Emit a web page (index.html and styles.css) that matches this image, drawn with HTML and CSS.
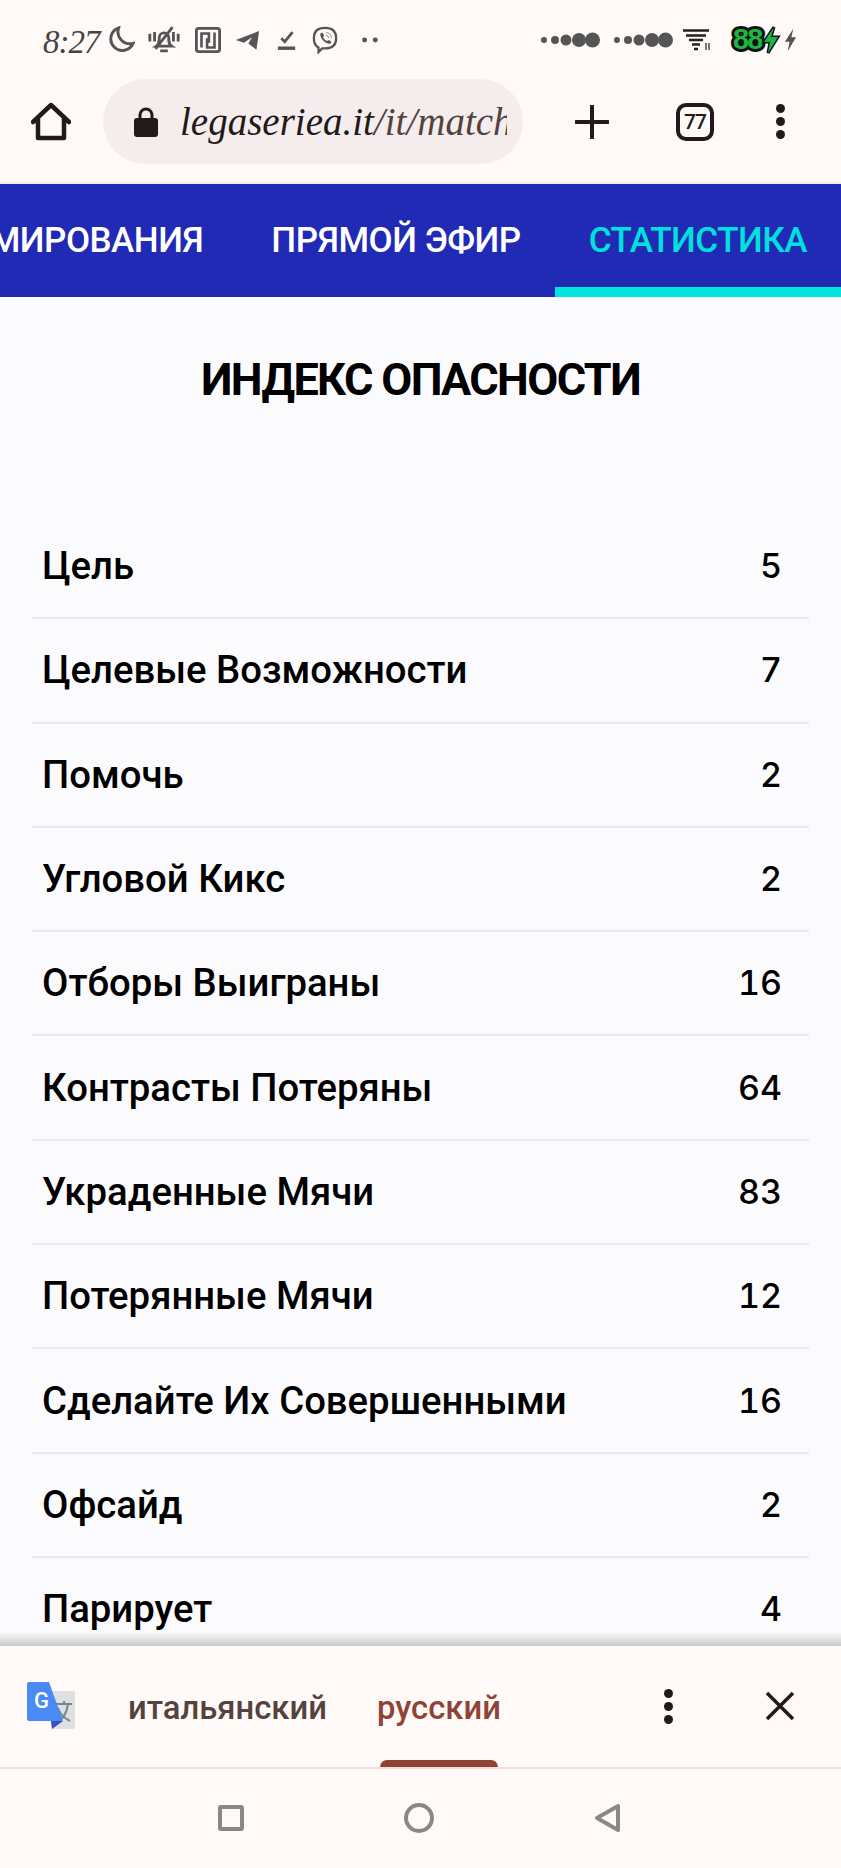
FILE: index.html
```html
<!DOCTYPE html>
<html lang="ru">
<head>
  <meta charset="UTF-8">
  <title>Индекс опасности</title>
  <link rel="stylesheet" href="styles.css">
</head>
<body>

<div class="phone">

  <!-- status bar -->
  <div class="statusbar">
    <span class="clock">8:27</span>
    <svg class="st-icon moon" viewBox="0 0 28 28"><path d="M11 2a12 12 0 1 0 15 16 A12.500 12.500 0 0 1 11 2z" fill="none" stroke="#555" stroke-width="3"/></svg>
    <svg class="st-icon bell" viewBox="0 0 36 30"><path d="M10 22c3-2 3-5 3-9a5 5 0 0 1 10 0c0 4 0 7 3 9z M14 27h8 M3 9v8 M8 7v10 M33 9v8 M28 7v10 M9 25 27 2" fill="none" stroke="#555" stroke-width="3"/></svg>
    <svg class="st-icon nfc" viewBox="0 0 28 28"><rect x="1.500" y="1.500" width="25" height="25" rx="2.500" fill="none" stroke="#555" stroke-width="3"/><path d="M7 22V7h8v10 M21 6v16h-8V12" fill="none" stroke="#555" stroke-width="2.800"/></svg>
    <svg class="st-icon tg" viewBox="0 0 28 24"><path d="M1 12 27 2 24 23 15 16 19 9 10 15z" fill="#555"/></svg>
    <svg class="st-icon chk" viewBox="0 0 22 24"><path d="M5 10l4 4 9-11" fill="none" stroke="#555" stroke-width="3.200"/><path d="M1 21.500h20" stroke="#555" stroke-width="4"/></svg>
    <svg class="st-icon viber" viewBox="0 0 28 30"><path d="M14 2c7 0 12 3 12 11s-5 11-12 11h-3l-4 4v-5C3 21 2 18 2 13 2 5 7 2 14 2z" fill="none" stroke="#555" stroke-width="2.400"/><path d="M9 8l2-1 2 3-1 2c1 2 2 3 4 4l2-1 3 2-1 2c-5 1-12-6-11-11z" fill="#555"/><path d="M15 7a6 6 0 0 1 6 6 M15 10a3 3 0 0 1 3 3" fill="none" stroke="#888" stroke-width="1"/></svg>
    <svg class="st-icon more" viewBox="0 0 18 6"><circle cx="3" cy="3" r="2.800" fill="#555"/><circle cx="15" cy="3" r="2.800" fill="#555"/></svg>

    <div class="st-right">
      <svg class="sig" viewBox="0 0 60 16"><circle cx="4" cy="8" r="3" fill="#555"/><circle cx="15" cy="8" r="4" fill="#555"/><circle cx="26" cy="8" r="5.500" fill="#555"/><circle cx="39" cy="8" r="7" fill="#555"/><circle cx="52.500" cy="8" r="7.500" fill="#555"/></svg>
      <svg class="sig" viewBox="0 0 60 16"><circle cx="4" cy="8" r="3" fill="#555"/><circle cx="15" cy="8" r="4" fill="#555"/><circle cx="26" cy="8" r="5.500" fill="#555"/><circle cx="39" cy="8" r="7" fill="#555"/><circle cx="52.500" cy="8" r="7.500" fill="#555"/></svg>
      <svg class="wifi" viewBox="0 0 28 22"><path d="M0 1.500h26 M3 6.500h20 M6 11h14 M9 15.500h8 M11 20h4" stroke="#222" stroke-width="2.600"/><path d="M23 14v7 M26 14v7" stroke="#555" stroke-width="1.600"/></svg>
      <span class="battery">88<svg class="batt-bolt" viewBox="0 0 20 30"><path d="M13 2 3 17h6l-2 11 10-16h-7z" fill="#1db53f" stroke="#111" stroke-width="3" paint-order="stroke"/></svg></span>
      <svg class="bolt" viewBox="0 0 14 24"><path d="M10 0 1 14h5l-2 10 9-15H8z" fill="#555"/></svg>
    </div>
  </div>

  <!-- browser toolbar -->
  <div class="toolbar">
    <svg class="home" viewBox="0 0 40 40"><path d="M2 20 20 3l18 17 M7 17v19h26V17" fill="none" stroke="#211a18" stroke-width="4.500" stroke-linejoin="round" stroke-linecap="round"/></svg>
    <div class="urlbar">
      <svg class="lock" viewBox="0 0 24 30"><path d="M6 13V8a6 6 0 0 1 12 0v5" fill="none" stroke="#211a18" stroke-width="3"/><rect x="0" y="11" width="24" height="19" rx="3" fill="#211a18"/></svg>
      <div class="url"><span class="url-host">legaseriea.it</span>/it/match-center</div>
    </div>
    <svg class="plus" viewBox="0 0 34 34"><path d="M17 1v32 M1 17h32" stroke="#211a18" stroke-width="4" stroke-linecap="round"/></svg>
    <div class="tabs-count">77</div>
    <div class="kebab"><i></i><i></i><i></i></div>
  </div>

  <!-- page -->
  <div class="page">
    <nav class="match-nav">
      <a class="nav-clip">ФОРМИРОВАНИЯ</a>
      <a>ПРЯМОЙ ЭФИР</a>
      <a class="active">СТАТИСТИКА</a>
    </nav>

    <h1 class="title">ИНДЕКС ОПАСНОСТИ</h1>

    <div class="stats">
      <div class="stat"><span>Цель</span><b>5</b></div>
      <div class="stat"><span>Целевые Возможности</span><b>7</b></div>
      <div class="stat"><span>Помочь</span><b>2</b></div>
      <div class="stat"><span>Угловой Кикс</span><b>2</b></div>
      <div class="stat"><span>Отборы Выиграны</span><b>16</b></div>
      <div class="stat"><span>Контрасты Потеряны</span><b>64</b></div>
      <div class="stat"><span>Украденные Мячи</span><b>83</b></div>
      <div class="stat"><span>Потерянные Мячи</span><b>12</b></div>
      <div class="stat"><span>Сделайте Их Совершенными</span><b>16</b></div>
      <div class="stat"><span>Офсайд</span><b>2</b></div>
      <div class="stat"><span>Парирует</span><b>4</b></div>
    </div>
  </div>

  <!-- translate bar -->
  <div class="translate">
    <svg class="gt" viewBox="0 0 48 48">
      <rect x="24" y="9" width="24" height="38" rx="2" fill="#dfe1e1"/>
      <path d="M29 22h16 M37 19v3 M32 39c6-4 8-10 9-17 M31 26c2 6 6 10 12 13" fill="none" stroke="#72888a" stroke-width="2"/>
      <path d="M2 0h20l14 39H2a2 2 0 0 1-2-2V2a2 2 0 0 1 2-2z" fill="#4a8af4"/>
      <path d="M24 39h12l-11 8z" fill="#3c4fc0"/>
      <text x="7" y="26" class="gt-g">G</text>
    </svg>
    <div class="lang">итальянский</div>
    <div class="lang selected">русский</div>
    <div class="kebab tr-kebab"><i></i><i></i><i></i></div>
    <svg class="close" viewBox="0 0 30 30"><path d="M2 2l26 26 M28 2 2 28" stroke="#211a18" stroke-width="3.500"/></svg>
  </div>

  <!-- android nav -->
  <div class="navbar">
    <svg class="nb-icon" viewBox="0 0 30 30"><rect x="4" y="4" width="22" height="22" rx="1" fill="none" stroke="#888" stroke-width="4"/></svg>
    <svg class="nb-icon" viewBox="0 0 30 30"><circle cx="15" cy="15" r="13" fill="none" stroke="#888" stroke-width="4"/></svg>
    <svg class="nb-icon" viewBox="0 0 30 30"><path d="M26 3v24L5 15z" fill="none" stroke="#888" stroke-width="4" stroke-linejoin="round"/></svg>
  </div>

</div>

</body>
</html>
```

FILE: styles.css
```css
* {
  box-sizing: border-box;
}
body {
  margin: 0;
  background: #fffaf8;
  font-family: Roboto, sans-serif;
}
.phone {
  width: 841px;
  height: 1868px;
  display: flex;
  flex-direction: column;
  overflow: hidden;
}

/* status bar */
.statusbar {
  height: 79px;
  padding: 0 0 0 43px;
  display: flex;
  align-items: center;
  flex-shrink: 0;
}
.clock {
  width: 65px;
  margin-top: 5px;
  font: italic 33px "Liberation Serif", serif;
  letter-spacing: -1px;
  color: #444;
}
.st-icon {
  display: block;
  flex-shrink: 0;
}
.moon { width: 27px; height: 27px; }
.bell { width: 34px; height: 29px; margin-left: 12px; }
.nfc { width: 26px; height: 26px; margin-left: 14px; }
.tg { width: 25px; height: 22px; margin-left: 14px; }
.chk { width: 19px; height: 24px; margin-left: 17px; }
.viber { width: 26px; height: 28px; margin-left: 16px; }
.more { width: 16px; height: 6px; margin-left: 24px; }
.st-right {
  display: flex;
  align-items: center;
  margin-left: 162px;
}
.sig {
  width: 60px;
  height: 16px;
  margin-right: 13px;
}
.wifi {
  width: 28px;
  height: 22px;
  margin-left: -3px;
}
.battery {
  margin-left: 19px;
  width: 54px;
  height: 30px;
  padding-left: 3px;
  display: flex;
  align-items: center;
  font: 700 29px/1 "Liberation Sans", sans-serif;
  letter-spacing: -2px;
  color: #1db53f;
  -webkit-text-stroke: 6px #111;
  paint-order: stroke fill;
}
.batt-bolt {
  width: 20px;
  height: 30px;
  flex-shrink: 0;
}
.bolt {
  width: 13px;
  height: 24px;
}

/* toolbar */
.toolbar {
  height: 105px;
  flex-shrink: 0;
  display: flex;
  align-items: center;
  padding-bottom: 18px;
  border-bottom: 2px solid #f6e8e8;
}
.home {
  width: 40px;
  height: 40px;
  margin-left: 31px;
}
.urlbar {
  width: 420px;
  height: 85px;
  margin-left: 32px;
  padding: 0 16px 0 31px;
  display: flex;
  align-items: center;
  background: #f5eded;
  border-radius: 43px;
}
.lock {
  width: 24px;
  height: 30px;
  flex-shrink: 0;
}
.url {
  margin-left: 22px;
  overflow: hidden;
  white-space: nowrap;
  font: italic 39px "Liberation Serif", serif;
  color: #54423e;
}
.url-host {
  color: #211a18;
}
.plus {
  width: 34px;
  height: 34px;
  margin-left: 52px;
}
.tabs-count {
  width: 38px;
  height: 38px;
  margin-left: 67px;
  border: 4px solid #211a18;
  border-radius: 10px;
  display: flex;
  align-items: center;
  justify-content: center;
  font: 500 21px Roboto, sans-serif;
  letter-spacing: -1px;
  color: #211a18;
}
.kebab {
  display: flex;
  flex-direction: column;
  gap: 4px;
  margin-left: 62px;
}
.kebab i {
  display: block;
  width: 9px;
  height: 9px;
  border-radius: 50%;
  background: #211a18;
}

/* page */
.page {
  flex: 1;
  min-height: 0;
  overflow: hidden;
  background: #fbfbfe;
  position: relative;
}
.page::after {
  content: "";
  position: absolute;
  left: 0;
  right: 0;
  bottom: 0;
  height: 14px;
  background: linear-gradient(rgba(0,0,0,0), rgba(0,0,0,0.2));
}
.match-nav {
  height: 113px;
  background: #212ab5;
  display: flex;
  justify-content: flex-end;
  align-items: stretch;
  white-space: nowrap;
}
.match-nav a {
  display: flex;
  align-items: center;
  padding: 10px 34px 0;
  color: #fff;
  font-size: 35px;
  font-weight: 500;
  letter-spacing: -0.500px;
  border-bottom: 10px solid transparent;
}
.match-nav a.active {
  color: #00e0dc;
  border-bottom-color: #00e6dc;
}
.title {
  margin: 57px 0 0;
  height: 161px;
  text-align: center;
  font-size: 45px;
  font-weight: 700;
  line-height: 52px;
  letter-spacing: -1.600px;
  color: #000;
}
.stats {
  margin: 0 32px;
}
.stat {
  height: 104.300px;
  padding: 0 27px 1px 10px;
  display: flex;
  justify-content: space-between;
  align-items: center;
  border-bottom: 2px solid #e9e9ee;
  font-size: 38.300px;
  color: #000;
}
.stat span {
  font-weight: 500;
}
.stat b {
  font-family: Inter, sans-serif;
  font-weight: 500;
  font-size: 34px;
  font-variant-numeric: tabular-nums;
}

/* translate bar */
.translate {
  height: 123px;
  flex-shrink: 0;
  display: flex;
  align-items: center;
  padding-left: 27px;
  border-bottom: 2px solid #f3dfda;
}
.gt {
  width: 48px;
  height: 48px;
  margin-top: -2px;
}
.gt-g {
  font: 500 22px Roboto, sans-serif;
  fill: #fff;
}
.lang {
  margin-left: 53px;
  margin-top: 3px;
  font-size: 32.800px;
  font-weight: 500;
  color: #54423e;
}
.lang.selected {
  position: relative;
  margin-left: 50px;
  color: #8f4334;
}
.lang.selected::after {
  content: "";
  position: absolute;
  left: 3px;
  right: 3px;
  bottom: -40px;
  height: 7px;
  background: #8f4334;
  border-radius: 7px 7px 0 0;
}
.tr-kebab {
  margin-left: 163px;
  margin-top: -1px;
}
.close {
  width: 30px;
  height: 30px;
  margin-left: 92px;
  margin-top: -1px;
}

/* android nav */
.navbar {
  height: 99px;
  flex-shrink: 0;
  display: flex;
  justify-content: center;
  align-items: center;
  gap: 158px;
  padding: 0 3px 2px 0;
}
.nb-icon {
  width: 30px;
  height: 30px;
}
```
